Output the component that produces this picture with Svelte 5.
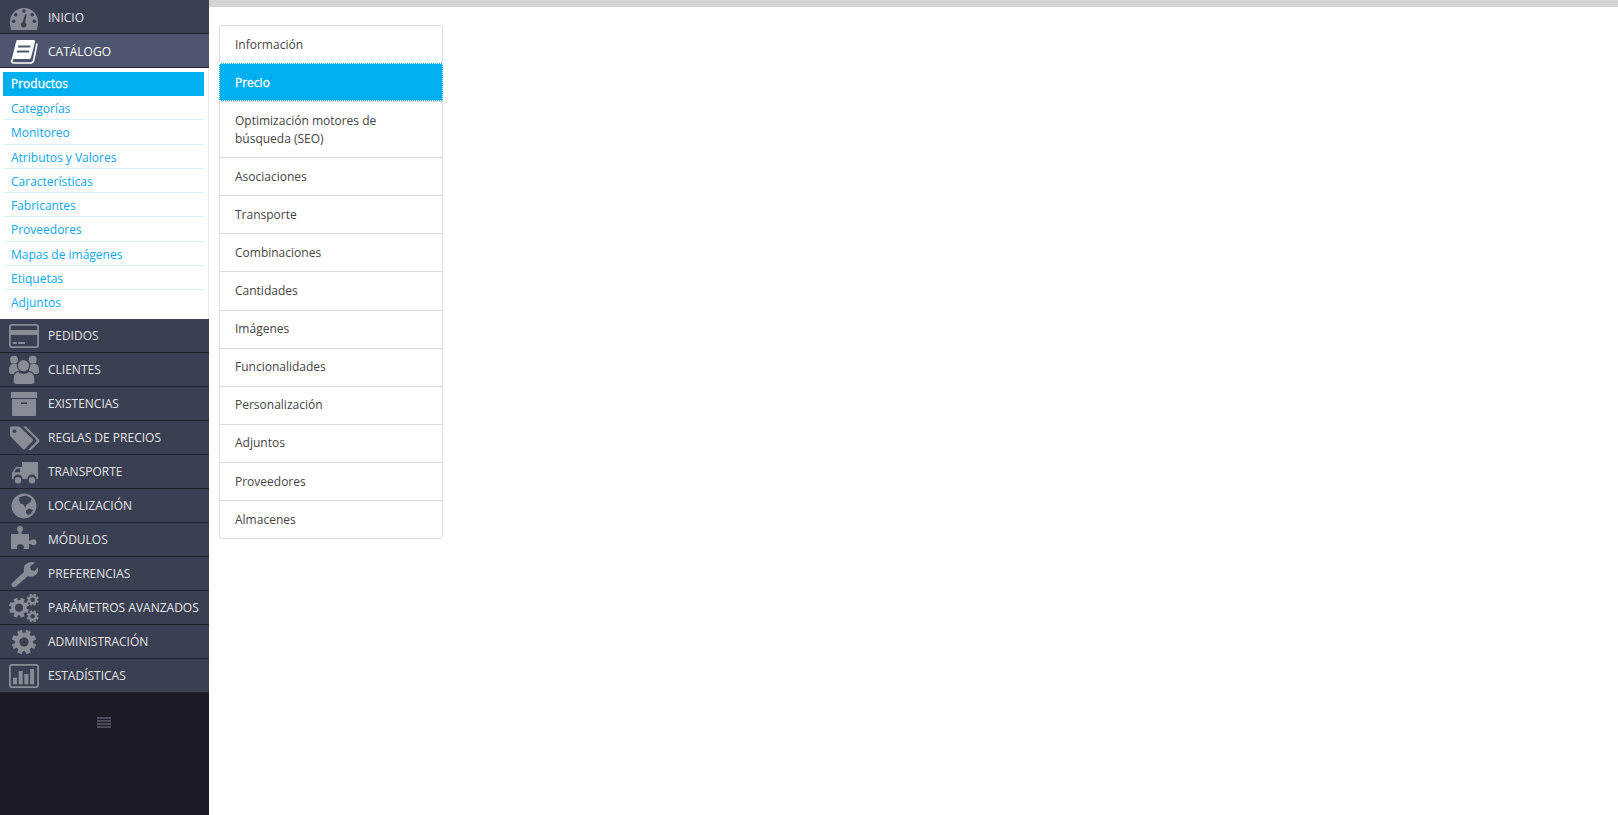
<script>
  const sub = ['Categorías','Monitoreo','Atributos y Valores','Características','Fabricantes','Proveedores','Mapas de imágenes','Etiquetas','Adjuntos'];
  const after = [
    ['PEDIDOS','card'],['CLIENTES','users'],['EXISTENCIAS','box'],['REGLAS DE PRECIOS','tags'],['TRANSPORTE','truck'],
    ['LOCALIZACIÓN','globe'],['MÓDULOS','puzzle'],['PREFERENCIAS','wrench'],['PARÁMETROS AVANZADOS','cogs'],['ADMINISTRACIÓN','cog'],['ESTADÍSTICAS','chart']
  ];
  const tabs = ['Asociaciones','Transporte','Combinaciones','Cantidades','Imágenes','Funcionalidades','Personalización','Adjuntos','Proveedores','Almacenes'];
  const bg = '#3a3f52';
</script>

{#snippet gear(cx, cy, r, hole)}
  <circle {cx} {cy} r={r*0.76} />
  {#each [22.5,67.5,112.5,157.5] as a}
    <rect x={cx-r*0.2} y={cy-r} width={r*0.4} height={r*2} transform="rotate({a} {cx} {cy})" />
  {/each}
  <circle {cx} {cy} r={hole} fill={bg} />
{/snippet}

{#snippet icon(name)}
  <svg class="ic" viewBox="0 0 34 34" aria-hidden="true">
    {#if name==='dash'}
      <path fill-rule="evenodd" d="M4 30Q3 26 3 22A14 14 0 0 1 31 22Q31 26 30 30Z" />
      <g fill={bg}>
        <circle cx="17" cy="11" r="1.8" /><circle cx="8.7" cy="14.7" r="1.8" /><circle cx="25.3" cy="14.7" r="1.8" />
        <circle cx="6.7" cy="21.3" r="1.8" /><circle cx="27.3" cy="21.3" r="1.8" />
        <path d="M18.2 14L19.6 14.4L18.3 22.4A2.8 2.8 0 1 1 15.8 22Z" />
      </g>
    {:else if name==='book'}
      <path fill-rule="evenodd" d="M10.5 6H26.5Q28.4 6 28 8L24 23.5Q23.5 25 22 25H7.5Q5.5 25 4.5 26.2L9 8Q9.5 6 10.5 6ZM11.4 11.6L10.9 13.6H23.2L23.7 11.6ZM10.2 16.6L9.7 18.6H21.8L22.3 16.6Z" />
      <path class="lip" d="M30 9.5L26.6 26.5Q26 29 23 29H7Q4.6 29 4.6 27Q4.6 26 6 26" />
    {:else if name==='card'}
      <rect class="line" x="2.9" y="5.9" width="28.2" height="22.2" rx="2" />
      <rect x="3" y="11" width="28" height="5" />
      <rect x="5.7" y="23" width="4" height="2" /><rect x="11.3" y="23" width="6.7" height="2" />
    {:else if name==='users'}
      <circle cx="7" cy="6.7" r="4" /><circle cx="25.7" cy="6.7" r="4" />
      <path d="M2 17Q2 11 6 11H9Q11 11 12 13V21H4Q2 21 2 19ZM32 17Q32 11 28 11H25Q23 11 22 13V21H30Q32 21 32 19Z" />
      <circle class="sep" cx="16.5" cy="12.7" r="6.2" />
      <path class="sep" d="M11 18.5Q16.5 22 22 18.5Q28 19 28 27V29Q28 31.5 24 31.5H10Q6 31.5 6 29V27Q6 19 11 18.5Z" />
    {:else if name==='box'}
      <rect x="4" y="5" width="26" height="6" rx="0.5" />
      <path fill-rule="evenodd" d="M5 12H29V28Q29 29 28 29H6Q5 29 5 28ZM14 15.3V17H20V15.3Z" />
    {:else if name==='tags'}
      <path fill-rule="evenodd" d="M3 7Q3 5.5 4.5 5.5H11Q12.5 5.5 13.5 6.5L25.5 18Q26.5 19 25.5 20.2L18 28Q17 29 15.8 28L4 16Q3 15 3 13.5ZM7.5 8.2A1.9 1.9 0 1 0 7.51 8.2Z" />
      <path d="M16 5.5H19L32 18.5Q33 20 32 21.3L24 29H21L29 20.7Q30 19.5 29 18.2Z" />
    {:else if name==='truck'}
      <path fill-rule="evenodd" d="M15 7H31V24H29.5A4.5 4.5 0 0 0 20.5 24H15.5A4.5 4.5 0 0 0 6.5 24H5V17.5L9 12H15ZM9.8 13.6L7 17.2H13V13.6Z" />
      <circle cx="11" cy="25.3" r="3.2" /><circle cx="25" cy="25.3" r="3.2" />
    {:else if name==='globe'}
      <path fill-rule="evenodd" d="M17 4.5A12.5 12.5 0 1 1 16.99 4.5ZM12.5 8L19 6.5L24.5 9.5L24 12.5L21.5 14.5L19.5 15.5L18.5 19L16.5 15.5L13.5 14.5L12 11.5ZM19 21.5L22 19.5L26 21L23.5 25L21 26L19 24Z" />
    {:else if name==='puzzle'}
      <circle cx="13" cy="6" r="3" /><circle cx="26.5" cy="19.3" r="3" />
      <path fill-rule="evenodd" d="M4 11H11.5V8H14.5V11H22V17.5H25V21H22V26H16.5Q17.5 24 16.5 22.5Q15 20.8 13 21Q10.5 21.3 10 23.3Q9.8 25 10.5 26H4Z" />
    {:else if name==='wrench'}
      <path d="M7 30Q5 30 4.5 28.5Q4 27 5.5 25.5L17 15Q16 9 19 7Q23 4 28 5.5L23 9.5L24 13L27.5 14L31 10Q32 16 28 18.5Q25 20.5 21 19L9 29.5Q8 30 7 30Z" />
    {:else if name==='cogs'}
      {@render gear(12,16.7,10,4)}
      {@render gear(25.7,8.7,6,2.2)}
      {@render gear(25.7,25.3,6,2.2)}
    {:else if name==='cog'}
      {@render gear(17,17,12.2,4.6)}
    {:else if name==='chart'}
      <rect class="line" x="2.9" y="5.9" width="28.2" height="22.2" rx="2" />
      <rect x="6" y="18.7" width="4" height="6.6" /><rect x="11.7" y="12" width="4" height="13.3" />
      <rect x="17.4" y="15" width="4" height="10.3" /><rect x="23.1" y="10" width="4" height="15.3" />
    {/if}
  </svg>
{/snippet}

<div class="page">
  <nav class="sidebar">
    <ul class="menu">
      <li class="item top"><a href="#top"><span class="slot">{@render icon('dash')}</span><span>INICIO</span></a></li>
      <li class="item top active"><a href="#top"><span class="slot">{@render icon('book')}</span><span>CATÁLOGO</span></a></li>
      <li class="submenu">
        <a class="subactive" href="#top">Productos</a>
        {#each sub as s}<a class="sublink" href="#top">{s}</a>{/each}
      </li>
      {#each after as [label, ic]}
        <li class="item"><a href="#top"><span class="slot">{@render icon(ic)}</span><span>{label}</span></a></li>
      {/each}
    </ul>
    <div class="foot">
      <span class="burger"><i></i><i></i><i></i><i></i></span>
    </div>
  </nav>

  <main class="main">
    <div class="topbar"></div>
    <div class="tabs">
      <a class="tab" href="#top">Información</a>
      <a class="tab on" href="#top">Precio</a>
      <a class="tab opt" href="#top">Optimización motores de búsqueda (SEO)</a>
      {#each tabs as t}<a class="tab" href="#top">{t}</a>{/each}
    </div>
  </main>
</div>

<style>
  :global(body) { margin: 0; background: #fff; }
  .page { display: flex; height: 815px; overflow: hidden; font-family: "Open Sans", sans-serif; font-size: 12px; }
  a { text-decoration: none; display: block; }
  .sidebar { width: 209px; flex: none; display: flex; flex-direction: column; background: #1a1d26; }
  .menu { list-style: none; margin: 0; padding: 0; }
  .item a { box-sizing: border-box; height: 34px; border-bottom: 1px solid #20232e; display: flex; align-items: center; color: #e4e5e8; background: #3a3f52; font-size: 12px; }
  .item.top a { padding-top: 1px; }
  .slot { width: 48px; flex: none; display: flex; justify-content: center; }
  .ic { width: 34px; height: 34px; flex: none; fill: #888c97; display: block; }
  .line { fill: none; stroke: #888c97; stroke-width: 1.8; }
  .sep { stroke: #3a3f52; stroke-width: 1.2; }
  .item.active a { background: #4e566f; color: #fff; }
  .item.active .ic { fill: #fff; }
  .lip { fill: none; stroke: #fff; stroke-width: 1.6; }
  .submenu { background: #fff; height: 251px; padding: 4px 4px 0 3px; box-sizing: border-box; border-right: 1px solid #e8e8e8; }
  .subactive { height: 24px; line-height: 23px; background: #00aff0; color: #fff; -webkit-text-stroke: 0.3px #fff; padding-left: 8px; }
  .sublink { box-sizing: border-box; height: 24.25px; padding: 2px 0 0 8px; line-height: 22px; color: #0aa8ee; border-bottom: 1px solid #d7f1fb; }
  .sublink:last-child { border-bottom: none; }
  .foot { flex: 1; display: flex; justify-content: center; padding: 24px 1px 0 0; }
  .burger { display: flex; flex-direction: column; gap: 1px; width: 14px; height: 12px; }
  .burger i { display: block; height: 2px; background: #4a4e5a; }
  .main { flex: 1; min-width: 0; }
  .topbar { height: 7px; background: #d5d5d5; }
  .tabs { margin: 18px 0 0 10px; width: 222px; border: 1px solid #dcdcdc; border-radius: 3px; }
  .tab { line-height: 18px; padding: 9.57px 15px; color: #444; border-top: 1px solid #dcdcdc; }
  .tab:first-child { border-top: none; padding-bottom: 9.2px; }
  .tab.opt { padding-top: 10px; padding-bottom: 9.14px; }
  .tab.on { background: #00aff0; color: #fff; -webkit-text-stroke: 0.3px #fff; margin: 0 -1px; padding: 10px 15px 8.14px; border: 1px dotted #fff; }
</style>
